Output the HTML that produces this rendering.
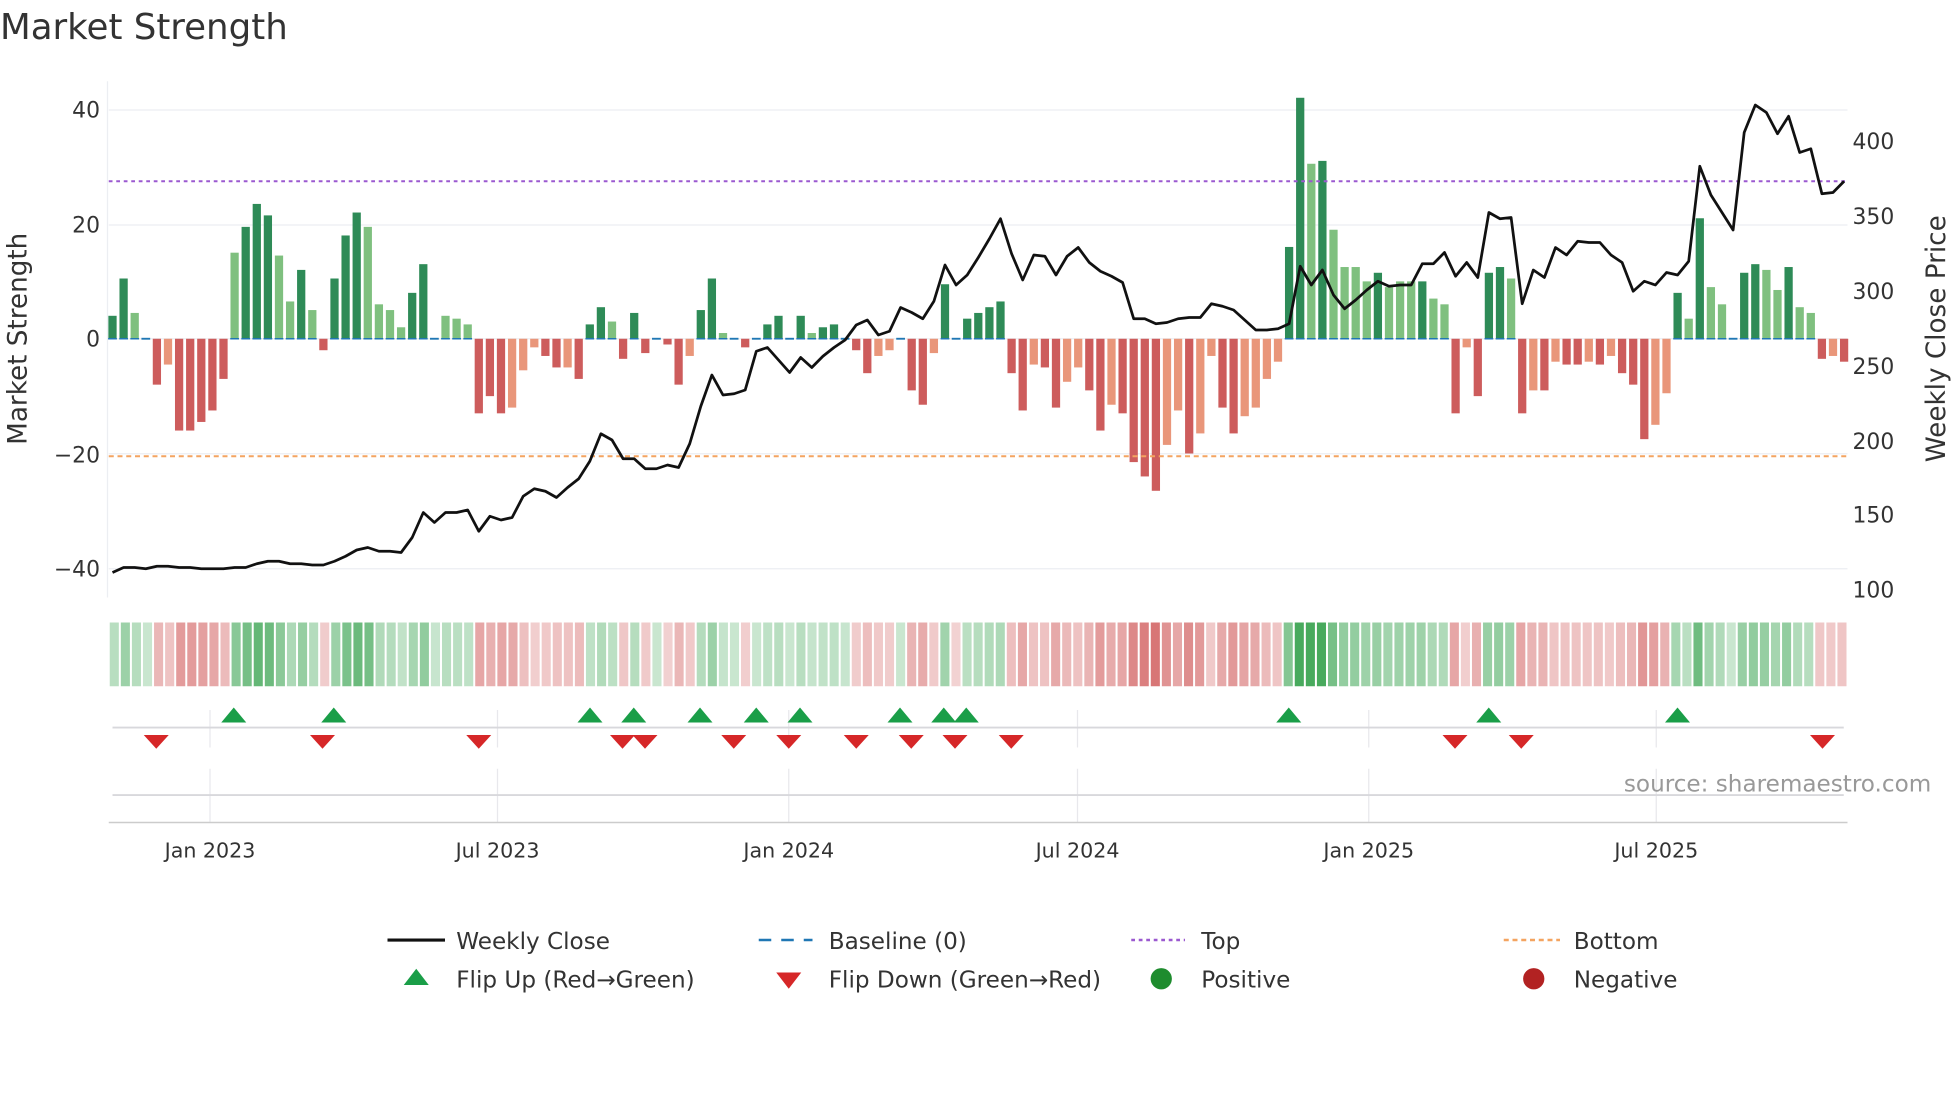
<!DOCTYPE html>
<html><head><meta charset="utf-8"><style>
html,body{margin:0;padding:0;background:#fff;width:1960px;height:1102px;overflow:hidden}
svg{display:block;font-family:"DejaVu Sans","Liberation Sans",sans-serif}
</style></head><body>
<svg id="s" width="1960" height="1102" viewBox="0 0 1568 881.6" xmlns="http://www.w3.org/2000/svg">
<rect width="1568" height="882" fill="#fff"/>
<text x="0" y="31" font-size="28.5" fill="#333">Market Strength</text>
<g stroke="#eceef2" stroke-width="1">
<line x1="87" x2="1478" y1="88" y2="88"/><line x1="87" x2="1478" y1="180" y2="180"/>
<line x1="87" x2="1478" y1="271" y2="271"/><line x1="87" x2="1478" y1="363" y2="363"/>
<line x1="87" x2="1478" y1="455" y2="455"/>
<line x1="86" x2="86" y1="65" y2="478"/>
</g>
<g stroke="#e8e8ec" stroke-width="1">
<line x1="168" x2="168" y1="568" y2="598"/><line x1="398" x2="398" y1="568" y2="598"/><line x1="631" x2="631" y1="568" y2="598"/><line x1="862" x2="862" y1="568" y2="598"/><line x1="1095" x2="1095" y1="568" y2="598"/><line x1="1325" x2="1325" y1="568" y2="598"/>
<line x1="168" x2="168" y1="615" y2="658"/><line x1="398" x2="398" y1="615" y2="658"/><line x1="631" x2="631" y1="615" y2="658"/><line x1="862" x2="862" y1="615" y2="658"/><line x1="1095" x2="1095" y1="615" y2="658"/><line x1="1325" x2="1325" y1="615" y2="658"/>
</g>
<line x1="90" x2="1475" y1="582" y2="582" stroke="#d8d8dc" stroke-width="1.5"/>
<line x1="90" x2="1475" y1="636" y2="636" stroke="#d8d8dc" stroke-width="1.5"/>
<line x1="87" x2="1478" y1="658" y2="658" stroke="#ccc" stroke-width="1.2"/>
<g id="bars"></g>
<g id="heat"></g>
<line x1="87" x2="1478" y1="145" y2="145" stroke="#9b59d0" stroke-width="1.6" stroke-dasharray="3,3"/>
<line x1="87" x2="1478" y1="365" y2="365" stroke="#f4a460" stroke-width="1.6" stroke-dasharray="4,3"/>
<polyline id="pl" fill="none" stroke="#111" stroke-width="2.2" stroke-linejoin="round"/>
<g id="mk"></g>
<g font-size="17.5" fill="#333" text-anchor="end">
<text x="80" y="94">40</text><text x="80" y="186">20</text><text x="80" y="277">0</text><text x="80" y="370">−20</text><text x="80" y="461">−40</text>
</g>
<g font-size="17.5" fill="#333">
<text x="1482" y="119">400</text><text x="1482" y="179">350</text><text x="1482" y="239">300</text><text x="1482" y="299">250</text><text x="1482" y="359">200</text><text x="1482" y="418">150</text><text x="1482" y="478">100</text>
</g>
<text transform="translate(21,271) rotate(-90)" font-size="21" fill="#333" text-anchor="middle">Market Strength</text>
<text transform="translate(1556,271) rotate(-90)" font-size="21" fill="#333" text-anchor="middle">Weekly Close Price</text>
<g font-size="16.5" fill="#333" text-anchor="middle">
<text x="168" y="686">Jan 2023</text><text x="398" y="686">Jul 2023</text><text x="631" y="686">Jan 2024</text><text x="862" y="686">Jul 2024</text><text x="1095" y="686">Jan 2025</text><text x="1325" y="686">Jul 2025</text>
</g>
<text x="1545" y="633" font-size="18.5" fill="#999" text-anchor="end">source: sharemaestro.com</text>
<g font-size="18.5" fill="#333">
<line x1="310" x2="356" y1="752" y2="752" stroke="#111" stroke-width="2.5"/><text x="365" y="759">Weekly Close</text>
<line x1="607" x2="650" y1="752" y2="752" stroke="#1f77b4" stroke-width="2" stroke-dasharray="10,8"/><text x="663" y="759">Baseline (0)</text>
<line x1="905" x2="948" y1="752" y2="752" stroke="#9b59d0" stroke-width="2" stroke-dasharray="3,3"/><text x="961" y="759">Top</text>
<line x1="1203" x2="1248" y1="752" y2="752" stroke="#f4a460" stroke-width="2" stroke-dasharray="4,3"/><text x="1259" y="759">Bottom</text>
<polygon points="323,788 343,788 333,775" fill="#1a9e48"/><text x="365" y="790">Flip Up (Red→Green)</text>
<polygon points="621,778 641,778 631,791" fill="#d62728"/><text x="663" y="790">Flip Down (Green→Red)</text>
<circle cx="929" cy="783" r="8.5" fill="#1e8c2e"/><text x="961" y="790">Positive</text>
<circle cx="1227" cy="783" r="8.5" fill="#b22222"/><text x="1259" y="790">Negative</text>
</g>
</svg>
<script>
var V=[4,10.5,4.5,0,-8,-4.5,-16,-16,-14.5,-12.5,-7,15,19.5,23.5,21.5,14.5,6.5,12,5,-2,10.5,18,22,19.5,6,5,2,8,13,0.5,4,3.5,2.5,-13,-10,-13,-12,-5.5,-1.5,-3,-5,-5,-7,2.5,5.5,3,-3.5,4.5,-2.5,0,-1,-8,-3,5,10.5,1,0,-1.5,0,2.5,4,0,4,1,2,2.5,0.5,-2,-6,-3,-2,0,-9,-11.5,-2.5,9.5,-0.5,3.5,4.5,5.5,6.5,-6,-12.5,-4.5,-5,-12,-7.5,-5,-9,-16,-11.5,-13,-21.5,-24,-26.5,-18.5,-12.5,-20,-16.5,-3,-12,-16.5,-13.5,-12,-7,-4,16,42,30.5,31,19,12.5,12.5,10,11.5,9,10,10,10,7,6,-13,-1.5,-10,11.5,12.5,10.5,-13,-9,-9,-4,-4.5,-4.5,-4,-4.5,-3,-6,-8,-17.5,-15,-9.5,8,3.5,21,9,6,0,11.5,13,12,8.5,12.5,5.5,4.5,-3.5,-3,-4];
var L=[2,5,11,15,16,18,23,24,25,26,30,31,32,36,37,38,41,45,52,55,63,69,70,74,83,86,87,90,95,96,98,99,102,103,104,105,108,110,111,112,113,115,116,117,119,120,122,126,128,130,133,135,139,140,142,144,145,149,150,152,153,155];
var Y=[458,454,454,455,453,453,454,454,455,455,455,454,454,451,449,449,451,451,452,452,449,445,440,438,441,441,442,430,410,418,410,410,408,425,413,416,414,397,391,393,398,390,383,369,347,352,367,367,375,375,372,374,355,325,300,316,315,312,281,278,288,298,286,294,285,278,272,260,256,268,265,246,250,255,241,212,228,220,206,191,175,203,224,204,205,220,205,198,210,217,221,226,255,255,259,258,255,254,254,243,245,248,256,264,264,263,259,213,228,216,236,247,240,232,225,229,228,228,211,211,202,221,210,222,170,175,174,243,216,222,198,204,193,194,194,204,210,233,225,228,218,220,209,133,156,170,184,106,84,90,107,93,122,119,155,154,145];
var ns="http://www.w3.org/2000/svg",b=document.getElementById('bars'),h=document.getElementById('heat'),mk=document.getElementById('mk');
function el(t,a,p){var e=document.createElementNS(ns,t);for(var k in a)e.setAttribute(k,a[k]);p.appendChild(e);return e}
var step=8.88,x0=90,pts=[],hs=1391/V.length;
for(var i=0;i<V.length;i++){var x=x0+step*i,v=V[i],lt=L.indexOf(i)>=0;
 if(Math.abs(v)<0.8){el('line',{x1:x-3.5,x2:x+3.5,y1:271,y2:271,stroke:'#1f77b4','stroke-width':1.5},b)}
 else{var hh=Math.abs(v)*4.59,c=v>0?(lt?'#7fc07f':'#2e8b57'):(lt?'#e9967a':'#cd5c5c');
  el('rect',{x:x-3.3,y:v>0?271-hh:271,width:6.6,height:hh,fill:c},b);
  if(v>0)el('line',{x1:x-3.5,x2:x+3.5,y1:271,y2:271,stroke:'#1f77b4','stroke-width':1.2},b);}
 var a=0.25+0.6*Math.min(Math.abs(v)/30,1);
 el('rect',{x:87+hs*i+0.8,y:498,width:hs-1.6,height:51,fill:v>=0?'rgba(40,155,65,'+a+')':'rgba(205,80,80,'+a+')'},h);
 pts.push(x+','+Y[i]);}
document.getElementById('pl').setAttribute('points',pts.join(' '));
[187,267,472,507,560,605,640,720,755,773,1031,1191,1342].forEach(function(x){el('polygon',{points:(x-10)+',578 '+(x+10)+',578 '+x+',566',fill:'#1a9e48'},mk)});
[125,258,383,498,516,587,631,685,729,764,809,1164,1217,1458].forEach(function(x){el('polygon',{points:(x-10)+',588 '+(x+10)+',588 '+x+',599',fill:'#d62728'},mk)});
</script>
</body></html>
